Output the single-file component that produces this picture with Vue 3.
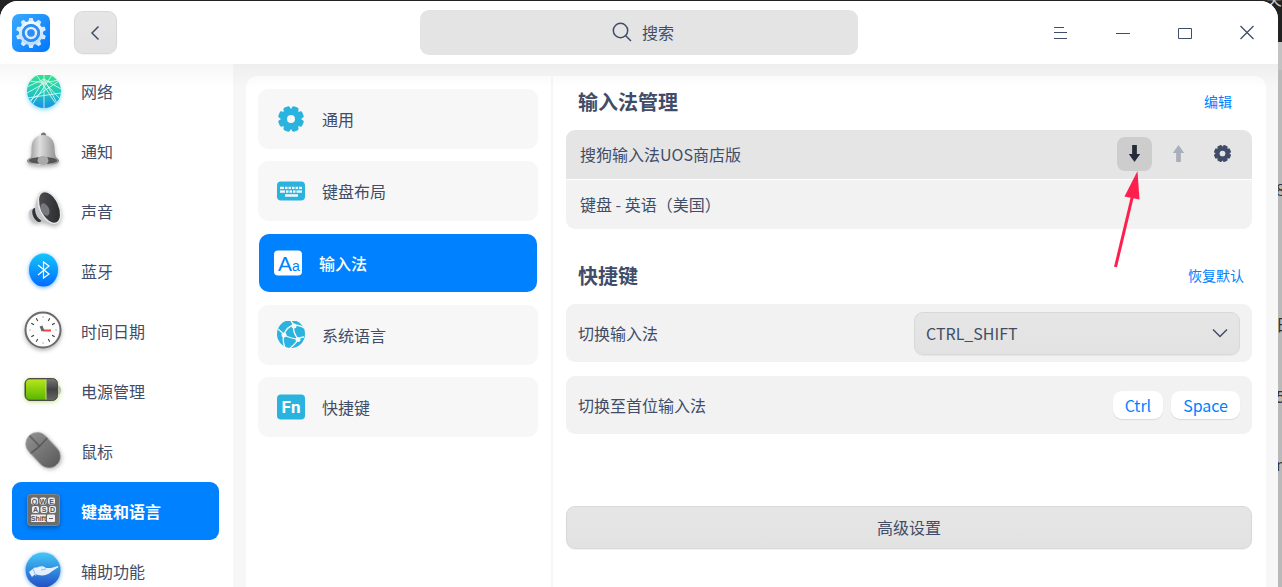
<script setup>
import { ref } from 'vue'

const teeth8 = [22.5, 67.5, 112.5, 157.5]
const teeth10 = [0, 36, 72, 108, 144, 180, 216, 252, 288, 324]
const ticks = [30, 60, 120, 150, 210, 240, 300, 330]

const modules = [
  { id: 'network', label: '网络' },
  { id: 'notice', label: '通知' },
  { id: 'sound', label: '声音' },
  { id: 'bluetooth', label: '蓝牙' },
  { id: 'time', label: '时间日期' },
  { id: 'power', label: '电源管理' },
  { id: 'mouse', label: '鼠标' },
  { id: 'keyboard', label: '键盘和语言' },
  { id: 'assist', label: '辅助功能' }
]
const activeModule = ref('keyboard')

const pages = [
  { id: 'general', label: '通用' },
  { id: 'layout', label: '键盘布局' },
  { id: 'input', label: '输入法' },
  { id: 'language', label: '系统语言' },
  { id: 'shortcut', label: '快捷键' }
]
const activePage = ref('input')

const search = ref('')
const switchKey = ref('CTRL_SHIFT')
const firstKeys = ['Ctrl', 'Space']
</script>

<template>
  <div class="desktop">
    <div class="behind" aria-hidden="true">
      <span class="frag top">关</span>
      <span class="frag f1">8</span>
      <span class="frag f2">日</span>
      <span class="frag f3">5</span>
      <span class="frag f4">n</span>
    </div>

    <div class="window">
      <header>
        <div class="header-left">
          <svg class="logo" viewBox="0 0 38 38">
            <defs>
              <linearGradient id="logo-bg" x1="0" y1="0" x2="1" y2="1">
                <stop offset="0" stop-color="#3ba9ff" />
                <stop offset="1" stop-color="#0078fb" />
              </linearGradient>
              <linearGradient id="logo-gear" x1="0" y1="0" x2="0" y2="1">
                <stop offset="0" stop-color="#f2f8ff" />
                <stop offset="1" stop-color="#b9dcff" />
              </linearGradient>
            </defs>
            <rect width="38" height="38" rx="7" fill="url(#logo-bg)" />
            <g fill="#d9ebff">
              <path v-for="a in teeth10" :key="a" d="M16 8.500 17.300 4h3.400L22 8.500z" :transform="`rotate(${a} 19 19)`" />
            </g>
            <circle cx="19" cy="19" r="10.500" fill="none" stroke="url(#logo-gear)" stroke-width="3" />
            <circle cx="19" cy="19" r="9" fill="#2b8df5" />
            <circle cx="19" cy="19" r="5" fill="none" stroke="#dcecff" stroke-width="2.500" />
          </svg>
          <button class="back" aria-label="返回">
            <svg viewBox="0 0 16 16"><path d="M10.500 1.500 4 8l6.500 6.500" /></svg>
          </button>
        </div>

        <label class="search">
          <svg viewBox="0 0 20 20">
            <circle cx="8.500" cy="8.500" r="7.200" />
            <path d="M13.500 13.500 19 19" />
          </svg>
          <input v-model="search" type="text" placeholder="搜索" aria-label="搜索">
        </label>

        <div class="controls">
          <button aria-label="菜单">
            <svg viewBox="0 0 16 16"><path d="M1 2.500h10M1 7.500h13M1 13.500h13" /></svg>
          </button>
          <button aria-label="最小化">
            <svg viewBox="0 0 16 16"><path d="M1 8.500h14" /></svg>
          </button>
          <button aria-label="最大化">
            <svg viewBox="0 0 16 16"><path d="M1.500 3.500h13v10h-13z" /></svg>
          </button>
          <button aria-label="关闭">
            <svg viewBox="0 0 16 16"><path d="M1.500 1l13 13M14.500 1l-13 13" stroke-width="1.300" /></svg>
          </button>
        </div>
      </header>

      <div class="body">
        <nav class="sidebar">
          <button
            v-for="item in modules"
            :key="item.id"
            class="module"
            :class="{ active: activeModule === item.id }"
            @click="activeModule = item.id"
          >
            <svg class="module-icon" viewBox="0 0 48 48">
              <template v-if="item.id === 'network'">
                <defs>
                  <linearGradient id="net" x1="0" y1="0" x2="0" y2="1">
                    <stop offset="0" stop-color="#38e58f" />
                    <stop offset=".55" stop-color="#22c8bd" />
                    <stop offset="1" stop-color="#198fe8" />
                  </linearGradient>
                  <clipPath id="net-clip"><circle cx="25" cy="24" r="17" /></clipPath>
                  <clipPath id="net-top"><rect y="8" width="48" height="40" /></clipPath>
                </defs>
                <g clip-path="url(#net-top)">
                  <circle class="cyan-glow" cx="25" cy="24" r="17" fill="url(#net)" />
                  <g clip-path="url(#net-clip)" fill="none" stroke="#e4fff5" stroke-opacity=".8">
                    <path d="M8 20 25 12 42 22M25 7v34M25 12 11 36M25 12l14 26M17 7l20 30M8 26l18-10 16 17M33 8 13 38M10 34 40 14M8 31l34-5" />
                    <path d="M11 14q14 3 29-1" />
                  </g>
                </g>
              </template>

              <template v-else-if="item.id === 'notice'">
                <defs>
                  <linearGradient id="bell" x1="0" y1="0" x2="1" y2="0">
                    <stop offset="0" stop-color="#8c8c8c" />
                    <stop offset=".4" stop-color="#dedede" />
                    <stop offset="1" stop-color="#858585" />
                  </linearGradient>
                </defs>
                <g class="gray-glow">
                  <circle cx="24.500" cy="8" r="2.500" fill="#777" />
                  <path d="M12 30c1-5 0-8 1-13 1-5 5-9 11-9s10 4 11 9c1 5 0 8 2 13l3 3c1 3-4 5-16 5S7 36 8 33z" fill="url(#bell)" />
                  <ellipse cx="24" cy="33.500" rx="14" ry="3.500" fill="#555" />
                  <ellipse cx="24" cy="33.500" rx="5.500" ry="4.500" fill="#aaa" />
                </g>
              </template>

              <template v-else-if="item.id === 'sound'">
                <defs>
                  <linearGradient id="horn" x1="0" y1="0" x2="1" y2="1">
                    <stop offset="0" stop-color="#555" />
                    <stop offset="1" stop-color="#222428" />
                  </linearGradient>
                </defs>
                <g class="gray-glow">
                  <ellipse cx="15" cy="28.500" rx="4.500" ry="7" fill="#c2c6cc" transform="rotate(-25 15 28.500)" />
                  <ellipse cx="18" cy="28" rx="4" ry="7.500" fill="#333" transform="rotate(-25 18 28)" />
                  <path d="M21 5c-3 6-4 10-5 17 0 5 3 10 7 12l14 4z" fill="#c4c6ca" />
                  <ellipse cx="30.500" cy="20.500" rx="9.500" ry="17" fill="url(#horn)" stroke="#e8e8e8" stroke-width="1.500" transform="rotate(-25 30.500 20.500)" />
                  <ellipse cx="26" cy="22.500" rx="4" ry="6.500" fill="#77797f" transform="rotate(-25 26 22.500)" />
                </g>
              </template>

              <template v-else-if="item.id === 'bluetooth'">
                <defs>
                  <linearGradient id="bt" x1="0" y1="0" x2="0" y2="1">
                    <stop offset="0" stop-color="#12c6fa" />
                    <stop offset="1" stop-color="#006bff" />
                  </linearGradient>
                </defs>
                <ellipse class="blue-glow" cx="24.500" cy="23" rx="14.500" ry="16.500" fill="url(#bt)" />
                <path d="m19 18 11 9-5.500 4V15l5.500 4-11 9" fill="none" stroke="#fff" stroke-width="1.200" />
              </template>

              <template v-else-if="item.id === 'time'">
                <g class="gray-glow">
                  <circle cx="24" cy="23" r="17.500" fill="#fdfdfd" stroke="#6b6b6b" stroke-width="2" />
                  <path v-for="a in ticks" :key="a" d="M24 9.500v3" stroke="#333" :transform="`rotate(${a} 24 23)`" />
                  <path d="M24 9v2M24 35v2M10 23h2M36 23h2" stroke="#bbb" />
                </g>
                <path d="M24 23.500h8" stroke="#ef4444" stroke-width="2" />
                <path d="m24 24-2-5" stroke="#666" stroke-width="3" />
              </template>

              <template v-else-if="item.id === 'power'">
                <defs>
                  <linearGradient id="cell" x1="0" y1="0" x2="0" y2="1">
                    <stop offset="0" stop-color="#b5e61a" />
                    <stop offset="1" stop-color="#5cb600" />
                  </linearGradient>
                  <linearGradient id="shell" x1="0" y1="0" x2="0" y2="1">
                    <stop offset="0" stop-color="#777" />
                    <stop offset=".5" stop-color="#444" />
                    <stop offset="1" stop-color="#666" />
                  </linearGradient>
                </defs>
                <g class="green-glow">
                  <path d="M38 18q4 1 4 5t-4 5z" fill="#bbb" />
                  <rect x="6" y="11.500" width="32.500" height="22" rx="5" fill="url(#shell)" stroke="#4c4b47" />
                  <path d="M11 12.500h16v20H11q-4 0-4-4v-12q0-4 4-4z" fill="url(#cell)" />
                  <path d="M27 12.500v20" stroke="#bfe56a" />
                </g>
              </template>

              <template v-else-if="item.id === 'mouse'">
                <defs>
                  <linearGradient id="mouse" x1="0" y1="0" x2="0" y2="1">
                    <stop offset="0" stop-color="#8e8e8e" />
                    <stop offset="1" stop-color="#5d5d5d" />
                  </linearGradient>
                </defs>
                <g class="gray-glow" transform="rotate(-43 24 23)">
                  <rect x="12.500" y="3" width="23" height="40" rx="11.500" fill="url(#mouse)" />
                  <path d="M12.500 17q11.500 2 23 0M24 3v15" fill="none" stroke="#444" />
                </g>
              </template>

              <template v-else-if="item.id === 'keyboard'">
                <rect class="gray-glow" x="8.500" y="7.500" width="32" height="31" rx="3" fill="#6d6d6d" stroke="#858585" />
                <g fill="#eee">
                  <rect x="12" y="10.500" width="7" height="7" rx="2" />
                  <rect x="20.500" y="10.500" width="7" height="7" rx="2" />
                  <rect x="29" y="10.500" width="7" height="7" rx="2" />
                  <rect x="13" y="19" width="7" height="7" rx="2" />
                  <rect x="21.500" y="19" width="7" height="7" rx="2" />
                  <rect x="30" y="19" width="7" height="7" rx="2" />
                  <rect x="12" y="27.500" width="15" height="7.500" rx="1" />
                  <rect x="28" y="27.500" width="8" height="7.500" rx="1" />
                </g>
                <g class="keycap">
                  <text x="15.500" y="16.500">Q</text>
                  <text x="24" y="16.500">W</text>
                  <text x="32.500" y="16.500">E</text>
                  <text x="16.500" y="25">A</text>
                  <text x="25" y="25">S</text>
                  <text x="33.500" y="25">D</text>
                  <text x="19.500" y="34">Shift</text>
                </g>
                <path d="M30 31.500h4" stroke="#666" />
              </template>

              <template v-else>
                <defs>
                  <linearGradient id="assist" x1="0" y1="0" x2="0" y2="1">
                    <stop offset="0" stop-color="#43c8f7" />
                    <stop offset="1" stop-color="#2450c6" />
                  </linearGradient>
                </defs>
                <circle class="blue-glow" cx="24" cy="23" r="17.500" fill="url(#assist)" />
                <path d="m10 25 5-4c1-1 3 0 4-1 3-1 6-1 8 1h5l7-2c1 1 0 2-1 2l-6 4c-3 3-8 4-13 3-3-1-4 0-6 2z" fill="#e2f0ff" />
                <path d="m14 22 3 7M27 22l-5 1" fill="none" stroke="#8dbdec" />
              </template>
            </svg>
            <span>{{ item.label }}</span>
          </button>
        </nav>

        <main>
          <div class="panel">
            <nav class="pages">
              <button
                v-for="page in pages"
                :key="page.id"
                class="page"
                :class="{ active: activePage === page.id }"
                @click="activePage = page.id"
              >
                <svg viewBox="0 0 28 28">
                  <template v-if="page.id === 'general'">
                    <rect v-for="a in teeth8" :key="a" x="10.500" y="1" width="7" height="26" rx="2" :transform="`rotate(${a} 14 14)`" />
                    <circle cx="14" cy="14" r="10.500" />
                    <circle cx="14" cy="14" r="4" fill="#f7f7f7" />
                  </template>
                  <template v-else-if="page.id === 'layout'">
                    <rect y="4.500" width="28" height="19" rx="4" />
                    <path d="M3 11h22M3 14.500h22M8 18.500h13" stroke="#f7f7f7" stroke-width="2.500" />
                    <path d="M7.500 9v3.500M11 9v3.500M14.500 9v3.500M18 9v3.500M21.500 9v3.500M8.500 13v3.500M12 13v3.500M15.500 13v3.500M19 13v3.500M3 12.700h22M3 16.500h22" stroke="#2ab3de" />
                  </template>
                  <template v-else-if="page.id === 'input'">
                    <rect y="1.500" width="28" height="25" rx="4" />
                    <text class="aa" x="4" y="22">A<tspan class="small-a">a</tspan></text>
                  </template>
                  <template v-else-if="page.id === 'language'">
                    <circle cx="14" cy="13" r="14" />
                    <g fill="none" stroke="#f7f7f7" stroke-width="1.300">
                      <path d="M1 8q3 2 6 6 2-8 10-10 6 0 10 3M17 4q-2 6 4 14 3-2 6-2M21 18q-6 0-14-4-2 5 1 13M21 18q-2 5-8 9M14 0l3 4" />
                    </g>
                    <g fill="#f7f7f7">
                      <circle cx="17" cy="5" r="2.500" />
                      <circle cx="7" cy="14" r="2.500" />
                      <circle cx="21" cy="18.500" r="2.500" />
                    </g>
                  </template>
                  <template v-else>
                    <rect y="1.500" width="28" height="25" rx="4" />
                    <text class="fn" x="14" y="20">Fn</text>
                  </template>
                </svg>
                <span>{{ page.label }}</span>
              </button>
            </nav>

            <section class="content">
              <div class="title">
                <h2>输入法管理</h2>
                <button class="link edit">编辑</button>
              </div>
              <ul class="methods">
                <li class="selected">
                  <span>搜狗输入法UOS商店版</span>
                  <div class="tools">
                    <button class="tool pressed" aria-label="下移">
                      <svg viewBox="0 0 20 20"><path d="M7.500 1h5v9.500h3.500L10 19 4 10.500h3.500z" fill="#252b3a" /></svg>
                    </button>
                    <button class="tool" aria-label="上移">
                      <svg viewBox="0 0 20 20"><path d="M7.500 19h5V9.500H16L10 1 4 9.500h3.500z" fill="#a8aebb" /></svg>
                    </button>
                    <button class="tool" aria-label="设置">
                      <svg viewBox="0 0 20 20" fill="#414d68">
                        <rect v-for="a in teeth8" :key="a" x="7.500" y="1" width="5" height="18" rx="1" :transform="`rotate(${a} 10 10)`" />
                        <circle cx="10" cy="10" r="7.500" />
                        <circle cx="10" cy="10" r="3" fill="#e5e5e5" />
                      </svg>
                    </button>
                    <svg class="pointer" viewBox="0 0 28 98">
                      <path d="m2.500 97 17-71" stroke="#ff1f4f" stroke-width="3" />
                      <path d="m24.500 1 2 28.500-15-3z" fill="#ff1f4f" />
                    </svg>
                  </div>
                </li>
                <li><span>键盘 - 英语（美国）</span></li>
              </ul>

              <div class="title shortcuts">
                <h2>快捷键</h2>
                <button class="link">恢复默认</button>
              </div>
              <div class="row">
                <label for="switch-key">切换输入法</label>
                <div class="select">
                  <select id="switch-key" v-model="switchKey">
                    <option>CTRL_SHIFT</option>
                    <option>ALT_SHIFT</option>
                  </select>
                  <svg viewBox="0 0 16 16"><path d="m1 4.500 7 7 7-7" /></svg>
                </div>
              </div>
              <div class="row">
                <span>切换至首位输入法</span>
                <div class="keys">
                  <kbd v-for="k in firstKeys" :key="k">{{ k }}</kbd>
                </div>
              </div>

              <button class="advanced">高级设置</button>
            </section>
          </div>
        </main>
      </div>
    </div>
  </div>
</template>

<style>
body {
  margin: 0;
  overflow: hidden;
}
</style>

<style scoped>
* {
  box-sizing: border-box;
}

.desktop {
  position: relative;
  height: 100vh;
  padding: 1px 4px 0 0;
  background: linear-gradient(#222 42px, #c2c2c2 42px, #c2c2c2 70px, #b9b9b9 70px);
  color: #414d68;
  font: 16px/24px "Noto Sans CJK SC", sans-serif;
  overflow: hidden;
}

button {
  padding: 0;
  border: none;
  background: none;
  color: inherit;
  font: inherit;
  cursor: pointer;
}

/* other windows peeking out from below */
.frag {
  position: absolute;
  left: calc(100% - 6px);
  color: #333;
}

.frag.top {
  top: -14px;
  left: calc(100% - 16px);
  color: #ccc;
}

.f1 { top: 177px; }
.f2 { top: 312px; }
.f3 { top: 384px; }
.f4 { top: 452px; }

.window {
  position: relative;
  display: flex;
  flex-direction: column;
  height: 100%;
  border-radius: 18px 18px 0 0;
  background: #fff;
  overflow: hidden;
}

header {
  position: relative;
  z-index: 1;
  flex: none;
  display: grid;
  grid-template-columns: 1fr minmax(0, 438px) 1fr;
  align-items: center;
  height: 63px;
  margin-bottom: -2px;
  background: #fff;
}

header::after {
  content: "";
  position: absolute;
  inset: 100% 0 auto;
  height: 24px;
  background: linear-gradient(rgba(0, 0, 0, 0.035), rgba(0, 0, 0, 0));
  pointer-events: none;
}

.header-left {
  display: flex;
  align-items: center;
  gap: 24px;
  padding-left: 12px;
}

.logo {
  width: 38px;
  height: 38px;
}

.back,
.advanced,
select {
  border: 1px solid #d8d8d8;
  border-radius: 9px;
  background: linear-gradient(#e6e6e6, #e2e2e2);
  box-shadow: 0 1px 1px rgba(0, 0, 0, 0.05);
}

.back {
  display: grid;
  place-items: center;
  width: 43px;
  height: 43px;
}

.back svg,
.controls svg {
  width: 16px;
  height: 16px;
}

.back svg,
.search svg,
.controls svg,
.select svg {
  fill: none;
  stroke: #414d68;
}

.back svg,
.search svg,
.select svg {
  stroke-width: 1.5;
}

.search {
  display: flex;
  justify-content: center;
  align-items: center;
  gap: 10px;
  height: 45px;
  padding: 0 0 2px 8px;
  border-radius: 9px;
  background: #e4e4e4;
}

.search svg {
  width: 20px;
  height: 20px;
}

.search input {
  field-sizing: content;
  padding: 0;
  border: none;
  outline: none;
  background: none;
  color: inherit;
  font: inherit;
}

.search input::placeholder {
  color: #414d68;
  opacity: 1;
}

.controls {
  display: flex;
  justify-content: flex-end;
}

.controls button {
  display: grid;
  place-items: center;
  width: 62px;
  height: 48px;
}

.body {
  flex: 1;
  display: flex;
  min-height: 0;
}

.sidebar {
  flex: none;
  display: flex;
  flex-direction: column;
  gap: 2px;
  width: 233px;
  padding: 0 14px 0 12px;
  overflow: hidden;
}

.module {
  flex: none;
  display: flex;
  align-items: center;
  gap: 14px;
  height: 58px;
  padding-left: 7px;
  border-radius: 9px;
  text-align: left;
}

.module.active,
.page.active {
  background: #0081ff;
  color: #fff;
}

.module.active {
  font-weight: 700;
}

.module-icon {
  width: 48px;
  height: 48px;
}

.gray-glow {
  filter: drop-shadow(0 2px 2px rgba(0, 0, 0, 0.3));
}

.cyan-glow {
  filter: drop-shadow(0 2px 2px rgba(30, 190, 240, 0.5));
}

.blue-glow {
  filter: drop-shadow(0 1px 2px rgba(0, 120, 255, 0.6));
}

.green-glow {
  filter: drop-shadow(0 1px 2px rgba(130, 200, 0, 0.5));
}

.keycap {
  fill: #555;
  font: bold 7px "Liberation Sans", sans-serif;
  text-anchor: middle;
}

main {
  flex: 1;
  min-width: 0;
  padding: 14px 12px 0 13px;
  background: #f7f7f7;
}

.panel {
  display: flex;
  height: 100%;
  border-radius: 12px 12px 0 0;
  background: #fff;
}

.pages {
  flex: none;
  display: flex;
  flex-direction: column;
  gap: 12px;
  width: 307px;
  padding: 13px 13px 0 12px;
  border-right: 2px solid #f7f7f7;
}

.page {
  display: flex;
  align-items: center;
  gap: 17px;
  height: 60px;
  padding-left: 19px;
  border-radius: 10px;
  background: #f7f7f7;
  text-align: left;
}

.page.active {
  height: 58px;
  margin: 1px;
  padding-left: 15px;
  font-weight: 500;
}

.page svg {
  width: 28px;
  height: 28px;
  fill: #2ab3de;
}

.page.active svg {
  fill: #fff;
}

.page.active .aa {
  fill: #0081ff;
  font: 21px "Liberation Sans", sans-serif;
}

.page .small-a {
  font-size: 14px;
}

.fn {
  fill: #fff;
  font: bold 17px Roboto, sans-serif;
  text-anchor: middle;
}

.content {
  flex: 1;
  min-width: 0;
  padding: 0 14px 0 13px;
}

.title {
  display: flex;
  justify-content: space-between;
  align-items: center;
  height: 54px;
  padding: 0 8px 2px 12px;
}

.title.shortcuts {
  margin-top: 21px;
}

h2 {
  margin: 0;
  font-size: 20px;
  font-weight: 700;
}

.link {
  padding-bottom: 2px;
  color: #0081ff;
  font-size: 14px;
}

.edit {
  margin-right: 12px;
}

.methods {
  display: flex;
  flex-direction: column;
  gap: 1px;
  margin: 0;
  padding: 0;
  list-style: none;
}

.methods li {
  display: flex;
  justify-content: space-between;
  align-items: center;
  height: 49px;
  padding: 0 12px 2px 14px;
  background: #f2f2f2;
}

.methods li:first-child {
  border-radius: 9px 9px 0 0;
}

.methods li:last-child {
  border-radius: 0 0 9px 9px;
}

.methods .selected {
  background: #e5e5e5;
}

.tools {
  position: relative;
  display: flex;
  gap: 9px;
}

.tool {
  display: grid;
  place-items: center;
  width: 35px;
  height: 34px;
  border-radius: 8px;
}

.tool.pressed {
  background: #cdcdcd;
}

.tool svg {
  width: 19px;
  height: 19px;
}

/* callout pointing at the move-down button */
.pointer {
  position: absolute;
  top: 33px;
  left: -4px;
  width: 28px;
  height: 98px;
  pointer-events: none;
}

.row {
  display: flex;
  justify-content: space-between;
  align-items: center;
  height: 58px;
  padding: 0 12px;
  border-radius: 9px;
  background: #f2f2f2;
}

.row + .row {
  margin-top: 14px;
}

.select {
  position: relative;
  width: 326px;
}

select {
  appearance: none;
  display: block;
  width: 100%;
  height: 43px;
  padding: 0 40px 0 11px;
  color: inherit;
  font: inherit;
}

.select svg {
  position: absolute;
  top: 13px;
  right: 12px;
  width: 16px;
  height: 16px;
  pointer-events: none;
}

.keys {
  display: flex;
  gap: 8px;
}

kbd {
  height: 28px;
  padding: 0 12px;
  border-radius: 9px;
  background: #fff;
  box-shadow: 0 1px 1px rgba(0, 0, 0, 0.1);
  color: #0081ff;
  font: 16px/28px "Noto Sans CJK SC", sans-serif;
}

.advanced {
  display: block;
  width: 100%;
  height: 43px;
  margin-top: 72px;
  padding-bottom: 2px;
}
</style>
